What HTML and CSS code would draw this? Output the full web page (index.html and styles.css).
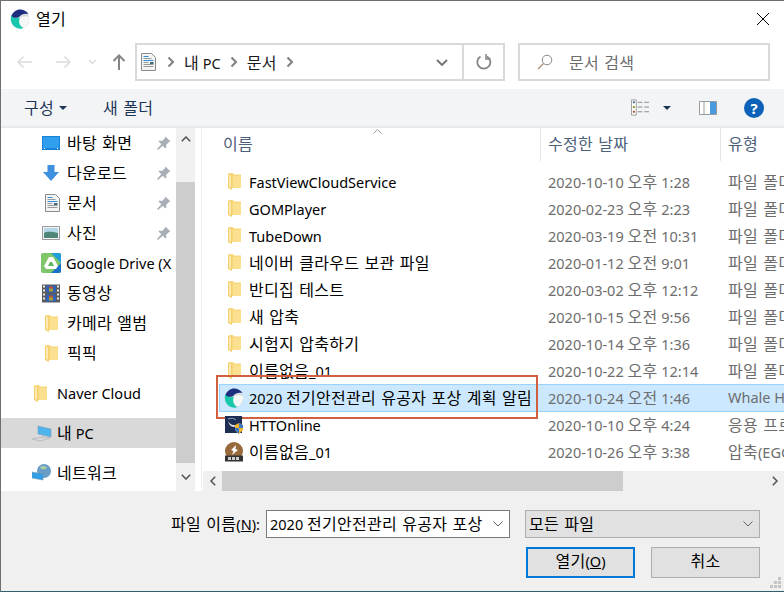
FILE: index.html
```html
<!DOCTYPE html>
<html lang="ko">
    <head>
        <meta charset="UTF-8">
        <title>열기</title>
        <link rel="stylesheet" href="styles.css">
    </head>
    <body>
        <svg class="defs" width="0" height="0">
            <symbol id="whale" viewBox="0 0 20 20">
                <circle cx="10" cy="10" r="9.500" fill="#d5dcde"/>
                <path d="M9 9c4-2 7-2 10-1 .5 4-1 8-5 10.500-3-.5-6-5-5-9.500z" fill="#f6f8f8"/>
                <path d="M1.500 6C0 10 1 15 5 18c3 2 6 2 8.500 1C9.500 17 8 13 10 8.500 7 10 4 9 1.500 6z" fill="#17c8ad"/>
                <path d="M1.500 7C3 3 6.500.5 10 .5c3.500 0 6.500 1.500 8.500 4.500-3.500-1-7.500 0-9.500 3-2.500 1.500-5.500 1-7.500-1z" fill="#1c2f7e"/>
            </symbol>
            <symbol id="folder" viewBox="0 0 13 17">
                <path d="M1 0h4l1 1.500h7v13.500H3z" fill="#f8d77c"/>
                <path d="M5 3h8v12H5z" fill="#fbe08f"/>
                <path d="M0 .5l4 1.500v15L0 15z" fill="#f5cf6c"/>
                <path d="M1 1.500l2 .8v12.500l-2-.8z" fill="#fdeab0"/>
            </symbol>
            <symbol id="doc" viewBox="0 0 15 18">
                <path d="M.5.500h10l4 4v13H.5z" fill="#f4f4f4" stroke="#8a8a8a"/>
                <path d="M2.500 3h5v1h-5zM2.500 7h10v1h-10z" fill="#2f8fdc"/>
                <path d="M2.500 5h8v1h-8zM2.500 9h5v1h-5zM2.500 11h10v1h-10zM2.500 13h10v1h-10z" fill="#9a9a9a"/>
                <path d="M9 9h3.500v2H9z" fill="#3d6b78"/>
            </symbol>
            <symbol id="pin" viewBox="0 0 14 14">
                <path d="M8.500.5l5 5-1.500.5-3 3 .5 2.500-1 1-2.800-2.800L1 14 0 13l4.300-4.700L1.500 5.500l1-1L5 5l3-3z" fill="#a9afb6"/>
            </symbol>
            <symbol id="chev" viewBox="0 0 8 12">
                <path d="M1.500 1.500L6 6l-4.500 4.500" fill="none" stroke="#808080" stroke-width="2"/>
            </symbol>
        </svg>

        <div class="dialog">
            <div class="titlebar">
                <svg class="whale-title"><use href="#whale"/></svg>
                <span class="title ko">열기</span>
                <svg class="close" viewBox="0 0 12 12"><path d="M0 0l12 12M12 0L0 12" stroke="#000" stroke-width="1" fill="none"/></svg>
            </div>

            <div class="navbar">
                <div class="navbtns">
                    <svg class="nav-arrow" viewBox="0 0 15 12"><path d="M15 6H1M6.500.5L1 6l5.500 5.500" fill="none" stroke="#dcdcdc" stroke-width="1.500"/></svg>
                    <svg class="nav-arrow forward" viewBox="0 0 15 12"><path d="M0 6h14M8.500.5L14 6l-5.500 5.500" fill="none" stroke="#dcdcdc" stroke-width="1.500"/></svg>
                    <svg class="nav-down" viewBox="0 0 9 6"><path d="M1 1l3.500 3.500L8 1" fill="none" stroke="#dcdcdc" stroke-width="1.500"/></svg>
                    <svg class="nav-up" viewBox="0 0 12 16"><path d="M6 16V1.500M.5 7L6 1.500 11.500 7" fill="none" stroke="#858585" stroke-width="2"/></svg>
                </div>
                <div class="address">
                    <svg class="addr-doc"><use href="#doc"/></svg>
                    <svg class="crumb-chev first"><use href="#chev"/></svg>
                    <span class="crumb"><span class="ko">내</span> PC</span>
                    <svg class="crumb-chev"><use href="#chev"/></svg>
                    <span class="crumb ko">문서</span>
                    <svg class="crumb-chev"><use href="#chev"/></svg>
                    <svg class="addr-down" viewBox="0 0 12 7"><path d="M1 1l5 5 5-5" fill="none" stroke="#707070" stroke-width="1.800"/></svg>
                    <div class="refresh">
                        <svg viewBox="0 0 16 16" width="16" height="16"><path d="M11 2.500A6.500 6.500 0 1 1 4.500 2.600" fill="none" stroke="#858585" stroke-width="1.800"/><path d="M10 0v5h4.500" fill="none" stroke="#858585" stroke-width="1.500"/></svg>
                    </div>
                </div>
                <div class="search">
                    <svg class="search-ico" viewBox="0 0 16 16"><circle cx="10" cy="6" r="4.800" fill="none" stroke="#8a8a8a" stroke-width="1"/><path d="M6.500 9.500L1 15" stroke="#b08a70" stroke-width="1.200"/></svg>
                    <span class="ko">문서 검색</span>
                </div>
            </div>

            <div class="commandbar">
                <span class="cmd ko">구성</span>
                <span class="caret"></span>
                <span class="cmd newfolder ko">새 폴더</span>
                <svg class="view-ico" viewBox="0 0 19 17">
                    <path d="M.5.500h5v16h-5z" fill="#fff" stroke="#9a9a9a"/>
                    <path d="M2 2h2v2H2z" fill="#3a5f96"/><path d="M2 7h2v2H2z" fill="#8f8f2e"/><path d="M2 12h2v2H2z" fill="#b0452e"/>
                    <path d="M7 3h5M14 3h5M7 8h5M14 8h5M7 13h5M14 13h5" stroke="#8a8a8a"/>
                </svg>
                <span class="caret view-caret"></span>
                <svg class="pane-ico" viewBox="0 0 18 14">
                    <path d="M.5.500h17v13H.5z" fill="#fff" stroke="#9a9a9a"/>
                    <path d="M11 1h6v12h-6z" fill="#4a9ae0"/>
                    <path d="M5 1v12" stroke="#9a9a9a"/>
                </svg>
                <span class="help">?</span>
            </div>

            <div class="main">
                <div class="sidebar">
                    <div class="nav-item"><svg class="si" viewBox="0 0 18 14"><path d="M0 0h18v14H0z" fill="#1b80d8"/><path d="M1 1h16v11H1z" fill="#2f9fee"/><path d="M2 12.500h1M15 12.500h1" stroke="#fff"/></svg><span class="ko">바탕 화면</span><svg class="pin"><use href="#pin"/></svg></div>
                    <div class="nav-item"><svg class="si" viewBox="0 0 18 16"><path d="M5.500 0h7v7H17l-8 9-8-9h4.500z" fill="#3f8fe0"/></svg><span class="ko">다운로드</span><svg class="pin"><use href="#pin"/></svg></div>
                    <div class="nav-item"><svg class="si si-doc"><use href="#doc"/></svg><span class="ko">문서</span><svg class="pin"><use href="#pin"/></svg></div>
                    <div class="nav-item"><svg class="si" viewBox="0 0 18 14"><path d="M.5.500h17v13H.5z" fill="#f4f4f4" stroke="#9a9a9a"/><path d="M2 2h14v5H2z" fill="#b4d6e8"/><path d="M2 7c4-2 8-1 14 0v5H2z" fill="#4f8678"/></svg><span class="ko">사진</span><svg class="pin"><use href="#pin"/></svg></div>
                    <div class="nav-item"><svg class="si si-square" viewBox="0 0 20 20"><rect width="20" height="20" rx="2" fill="#7fc66a"/><path d="M10 0h8a2 2 0 0 1 2 2v8z" fill="#1e9fdc"/><path d="M20 10v8a2 2 0 0 1-2 2H10z" fill="#1a72c8"/><path d="M8 4h4l5 9-2 3H5l-2-3z" fill="#fff"/><path d="M9 9h2l2 4H7z" fill="#5bb55f"/></svg><span>Google Drive (X</span></div>
                    <div class="nav-item"><svg class="si si-film" viewBox="0 0 18 18"><path d="M0 0h18v18H0z" fill="#5b5b5b"/><path d="M1 1h2v2H1zM1 5h2v2H1zM1 9h2v2H1zM1 13h2v2H1zM15 1h2v2h-2zM15 5h2v2h-2zM15 9h2v2h-2zM15 13h2v2h-2z" fill="#e8e8e8"/><path d="M4 1h10v7H4z" fill="#2f62b8"/><path d="M4 10h10v7H4z" fill="#2f62b8"/><path d="M7 2h4v2H7zM7 11h4v2H7z" fill="#c8502a"/><path d="M7 4h4v3H7zM7 13h4v3H7z" fill="#a8a02a"/></svg><span class="ko">동영상</span></div>
                    <div class="nav-item"><svg class="si si-folder"><use href="#folder"/></svg><span class="ko">카메라 앨범</span></div>
                    <div class="nav-item"><svg class="si si-folder"><use href="#folder"/></svg><span class="ko">픽픽</span></div>
                    <div class="nav-item root group"><svg class="si si-folder"><use href="#folder"/></svg><span>Naver Cloud</span></div>
                    <div class="nav-item root group selected"><svg class="si" viewBox="0 0 20 16"><path d="M6 1l13 3v8L6 9z" fill="#4fb4ee" stroke="#7f9fb8" stroke-width=".6"/><path d="M12 11l-1 2M0 14l11-2 7 1-10 3z" fill="none" stroke="#b9bdc2"/></svg><span><span class="ko">내</span> PC</span></div>
                    <div class="nav-item root group"><svg class="si" viewBox="0 0 20 18"><circle cx="12" cy="7" r="7" fill="#6a9cc8"/><path d="M8 3c3-2 6-1 7 1-2 2-6 2-7-1z" fill="#a8d0a0"/><path d="M0 8l11 2v6L0 14z" fill="#2f9fe8" stroke="#6f93b0" stroke-width=".6"/></svg><span class="ko">네트워크</span></div>
                </div>

                <div class="vscroll">
                    <div class="sb-btn"><svg viewBox="0 0 10 6" width="10" height="6"><path d="M.8 5.200L5 1l4.200 4.200" fill="none" stroke="#505050" stroke-width="1.500"/></svg></div>
                    <div class="sb-thumb"></div>
                    <div class="sb-btn"><svg viewBox="0 0 10 6" width="10" height="6"><path d="M.8.800L5 5l4.200-4.200" fill="none" stroke="#505050" stroke-width="1.500"/></svg></div>
                </div>

                <div class="files">
                    <div class="header">
                        <svg class="sort" viewBox="0 0 9 5"><path d="M.5 4.500L4.500.5l4 4" fill="none" stroke="#9a9a9a"/></svg>
                        <div class="col-name ko">이름</div>
                        <div class="col-date ko">수정한 날짜</div>
                        <div class="col-type ko">유형</div>
                    </div>
                    <div class="rows">
                        <div class="row"><svg class="fi fi-folder"><use href="#folder"/></svg><span class="name">FastViewCloudService</span><span class="date">2020-10-10 <span class="ko">오후</span> 1:28</span><span class="type ko">파일 폴더</span></div>
                        <div class="row"><svg class="fi fi-folder"><use href="#folder"/></svg><span class="name">GOMPlayer</span><span class="date">2020-02-23 <span class="ko">오후</span> 2:23</span><span class="type ko">파일 폴더</span></div>
                        <div class="row"><svg class="fi fi-folder"><use href="#folder"/></svg><span class="name">TubeDown</span><span class="date">2020-03-19 <span class="ko">오전</span> 10:31</span><span class="type ko">파일 폴더</span></div>
                        <div class="row"><svg class="fi fi-folder"><use href="#folder"/></svg><span class="name ko">네이버 클라우드 보관 파일</span><span class="date">2020-01-12 <span class="ko">오전</span> 9:01</span><span class="type ko">파일 폴더</span></div>
                        <div class="row"><svg class="fi fi-folder"><use href="#folder"/></svg><span class="name ko">반디집 테스트</span><span class="date">2020-03-02 <span class="ko">오후</span> 12:12</span><span class="type ko">파일 폴더</span></div>
                        <div class="row"><svg class="fi fi-folder"><use href="#folder"/></svg><span class="name ko">새 압축</span><span class="date">2020-10-15 <span class="ko">오전</span> 9:56</span><span class="type ko">파일 폴더</span></div>
                        <div class="row"><svg class="fi fi-folder"><use href="#folder"/></svg><span class="name ko">시험지 압축하기</span><span class="date">2020-10-14 <span class="ko">오후</span> 1:36</span><span class="type ko">파일 폴더</span></div>
                        <div class="row"><svg class="fi fi-folder"><use href="#folder"/></svg><span class="name mixed"><span class="ko">이름없음</span>_01</span><span class="date">2020-10-22 <span class="ko">오후</span> 12:14</span><span class="type ko">파일 폴더</span></div>
                        <div class="row selected"><svg class="fi"><use href="#whale"/></svg><span class="name mixed">2020 <span class="ko">전기안전관리 유공자 포상 계획 알림</span></span><span class="date">2020-10-24 <span class="ko">오전</span> 1:46</span><span class="type">Whale HTML</span><div class="callout"></div></div>
                        <div class="row"><svg class="fi" viewBox="0 0 20 20"><path d="M1 1h17v17H1z" fill="#1e2f55"/><path d="M4 6c2 4 6 5 9 4-2 3-7 3-9-4z" fill="#e6e6e6"/><path d="M4 4c3-1 6-1 8 1" fill="none" stroke="#8fa8c8"/><path d="M11 10l4-2 4 2v5l-4 4-4-4z" fill="#f0b429"/><path d="M15 8l4 2v3h-4zM11 13h4v6l-4-4z" fill="#3d78c8"/></svg><span class="name">HTTOnline</span><span class="date">2020-10-10 <span class="ko">오후</span> 4:24</span><span class="type ko">응용 프로그램</span></div>
                        <div class="row"><svg class="fi" viewBox="0 0 20 20"><circle cx="10" cy="9" r="9" fill="#96683a"/><path d="M12 3L7 8l2.500 1L8 13l6-5-2.500-1z" fill="#fff"/><path d="M1 13.500h18v6H1z" fill="#333"/><path d="M4 15h3v3H4zM8 15h3v3H8zM12 15h3v3h-3z" fill="#ccc"/></svg><span class="name mixed"><span class="ko">이름없음</span>_01</span><span class="date">2020-10-26 <span class="ko">오후</span> 3:38</span><span class="type mixed"><span class="ko">압축</span>(EGG)</span></div>
                    </div>
                    <div class="hscroll">
                        <div class="hs-btn"><svg viewBox="0 0 6 10" width="6" height="10"><path d="M5.200.8L1 5l4.200 4.200" fill="none" stroke="#505050" stroke-width="1.500"/></svg></div>
                        <div class="hs-thumb"></div>
                        <div class="hs-track"></div>
                        <div class="hs-btn"><svg viewBox="0 0 6 10" width="6" height="10"><path d="M.8.800L5 5 .8 9.200" fill="none" stroke="#505050" stroke-width="1.500"/></svg></div>
                    </div>
                </div>
            </div>

            <div class="footer">
                <div class="name-line">
                    <label class="fname-label"><span class="ko">파일 이름</span>(<u>N</u>):</label>
                    <div class="fname-input">
                        <span>2020 <span class="ko">전기안전관리 유공자 포상</span></span>
                        <svg class="combo-chev" viewBox="0 0 10 6"><path d="M.5.500L5 5 9.500.5" fill="none" stroke="#606060"/></svg>
                    </div>
                    <div class="ftype">
                        <span class="ko">모든 파일</span>
                        <svg class="combo-chev" viewBox="0 0 10 6"><path d="M.5.500L5 5 9.500.5" fill="none" stroke="#606060"/></svg>
                    </div>
                </div>
                <div class="button-line">
                    <div class="btn default"><span class="ko">열기</span>(<u>O</u>)</div>
                    <div class="btn ko">취소</div>
                </div>
                <svg class="grip" viewBox="0 0 12 12"><path d="M8 0h3v3H8zM4 4h3v3H4zM8 4h3v3H8zM0 8h3v3H0zM4 8h3v3H4zM8 8h3v3H8z" fill="#c4c4c4"/></svg>
            </div>
        </div>
    </body>
</html>
```

FILE: styles.css
```css
html, body {
    margin: 0;
    padding: 0;
    background: #ffffff;
}

body {
    font-family: "Noto Sans", "Noto Sans CJK KR", sans-serif;
    font-size: 14.5px;
    color: #000000;
}

/* hangul runs a bit bigger than latin, like the system font */
.ko {
    font-size: 16px;
    letter-spacing: .28px;
    word-spacing: .8px;
}

/* the CJK font sits low in its line box, pull those runs up */
.row > .ko, .nav-item > .ko, .cmd, .title,
.mixed, .date, .selected > span, .name-line span, .fname-label {
    margin-top: -2px;
}

.defs {
    position: absolute;
}

svg {
    display: block;
    flex: none;
}

.dialog {
    width: 784px;
    height: 592px;
    box-sizing: border-box;
    border-top: 1px solid #6f6f6f;
    border-left: 1px solid #6f6f6f;
    border-bottom: 1px solid #2f5f6a;
    display: flex;
    flex-direction: column;
    overflow: hidden;
    background: #ffffff;
}

/* title */
.titlebar {
    height: 42px;
    flex: none;
    display: flex;
    align-items: center;
    padding: 0 15px 6px 9px;
    box-sizing: border-box;
}

.whale-title {
    width: 20px;
    height: 20px;
}

.title {
    margin-left: 6px;
    flex: 1;
}

.close {
    width: 12px;
    height: 12px;
}

/* address row */
.navbar {
    height: 46px;
    flex: none;
    display: flex;
    align-items: flex-start;
    box-sizing: border-box;
}

.navbtns {
    width: 134px;
    height: 38px;
    display: flex;
    align-items: center;
    padding-left: 16px;
    box-sizing: border-box;
}

.nav-arrow {
    width: 15px;
    height: 12px;
}

.nav-arrow.forward {
    margin-left: 24px;
}

.nav-down {
    width: 9px;
    height: 6px;
    margin-left: 17px;
}

.nav-up {
    width: 12px;
    height: 16px;
    margin-left: 16px;
}

.address {
    width: 370px;
    height: 38px;
    box-sizing: border-box;
    border: 2px solid #d9d9d9;
    display: flex;
    align-items: center;
    padding-left: 4px;
}

.addr-doc {
    width: 15px;
    height: 18px;
}

.crumb-chev {
    width: 8px;
    height: 12px;
    margin: 0 9px 0 9px;
}

.crumb-chev.first {
    margin-left: 11px;
}

.crumb {
    color: #1a1a1a;
}

.addr-down {
    width: 12px;
    height: 7px;
    margin-left: auto;
    margin-right: 14px;
}

.refresh {
    width: 41px;
    height: 34px;
    border-left: 2px solid #d9d9d9;
    display: flex;
    align-items: center;
    justify-content: center;
    box-sizing: border-box;
}

.search {
    width: 252px;
    height: 38px;
    margin-left: 13px;
    box-sizing: border-box;
    border: 2px solid #d9d9d9;
    display: flex;
    align-items: center;
    padding-left: 17px;
    color: #6d6d6d;
}

.search-ico {
    width: 16px;
    height: 16px;
    margin-right: 16px;
}

/* command bar */
.commandbar {
    height: 37px;
    flex: none;
    background: #f3f4f6;
    border-bottom: 2px solid #e8e9eb;
    display: flex;
    align-items: center;
    padding-left: 23px;
}

.cmd {
    color: #1c3557;
}

.caret {
    width: 0;
    height: 0;
    border-left: 4px solid transparent;
    border-right: 4px solid transparent;
    border-top: 4px solid #1c3557;
    margin-left: 5px;
}

.newfolder {
    margin-left: 36px;
}

.view-ico {
    width: 18px;
    height: 17px;
    margin-left: auto;
}

.view-caret {
    margin-left: 14px;
}

.pane-ico {
    width: 18px;
    height: 14px;
    margin-left: 28px;
}

.help {
    width: 20px;
    height: 20px;
    border-radius: 50%;
    background: #0b62b8;
    color: #ffffff;
    font-weight: bold;
    font-size: 15px;
    line-height: 20px;
    text-align: center;
    margin-left: 27px;
    margin-right: 20px;
}

/* main area */
.main {
    flex: 1;
    display: flex;
    min-height: 0;
}

.sidebar {
    width: 175px;
    flex: none;
    overflow: hidden;
}

.nav-item {
    height: 30px;
    display: flex;
    align-items: center;
    padding-left: 41px;
    white-space: nowrap;
}

.nav-item .si {
    width: 18px;
    height: 16px;
    margin-right: 7px;
}

.nav-item .si-doc {
    width: 15px;
    height: 18px;
    margin-left: 3px;
    margin-right: 7px;
}

.nav-item .si-square {
    width: 20px;
    height: 20px;
    margin-left: -1px;
    margin-right: 5px;
}

.nav-item .si-film {
    width: 18px;
    height: 19px;
}

.nav-item .si-folder {
    width: 13px;
    height: 17px;
    margin-left: 3px;
    margin-right: 9px;
}

.nav-item.root {
    padding-left: 31px;
}

.nav-item.root .si {
    width: 20px;
    height: 18px;
    margin-right: 5px;
}

.nav-item.root .si-folder {
    width: 13px;
    height: 17px;
    margin-left: 2px;
    margin-right: 10px;
}

.group {
    margin-top: 10px;
}

.nav-item.selected {
    background: #d9d9d9;
}

.pin {
    width: 14px;
    height: 14px;
    margin-left: auto;
    margin-right: 5px;
}

.vscroll {
    width: 19px;
    flex: none;
    background: #f0f0f0;
    display: flex;
    flex-direction: column;
}

.sb-btn {
    height: 28px;
    flex: none;
    display: flex;
    align-items: center;
    justify-content: center;
}

.sb-btn:first-child {
    height: 54px;
    align-items: flex-start;
    padding-top: 8px;
    box-sizing: border-box;
}

.sb-thumb {
    flex: 1;
    background: #cdcdcd;
}

.files {
    flex: 1;
    min-width: 0;
    margin-left: 6px;
    border-left: 1px solid #f0f0f0;
    display: flex;
    flex-direction: column;
    position: relative;
}

.header {
    height: 40px;
    flex: none;
    display: flex;
    color: #4c607a;
    position: relative;
}

.sort {
    position: absolute;
    left: 171px;
    top: 1px;
    width: 9px;
    height: 5px;
}

.col-name {
    width: 339px;
    padding-left: 21px;
    box-sizing: border-box;
    border-right: 1px solid #e5e5e5;
    height: 33px;
    line-height: 33px;
}

.col-date {
    width: 180px;
    padding-left: 7px;
    box-sizing: border-box;
    border-right: 1px solid #e5e5e5;
    height: 33px;
    line-height: 33px;
}

.col-type {
    padding-left: 7px;
    height: 33px;
    line-height: 33px;
    white-space: nowrap;
}

.rows {
    flex: 1;
    min-height: 0;
}

.row {
    height: 27px;
    display: flex;
    align-items: center;
    white-space: nowrap;
    box-sizing: border-box;
    margin-left: 17px;
    position: relative;
}

.fi {
    width: 20px;
    height: 20px;
    margin-left: 5px;
}

.fi-folder {
    width: 13px;
    height: 17px;
    margin-left: 9px;
    margin-right: 3px;
}

.name {
    width: 299px;
    margin-left: 5px;
    flex: none;
}

.date {
    width: 180px;
    flex: none;
    color: #6d6d6d;
}

.type {
    color: #6d6d6d;
}

.row.selected {
    background: #cce8ff;
    border-top: 1px solid #99d1ff;
    border-bottom: 1px solid #99d1ff;
    border-left: 1px solid #99d1ff;
    height: 28px;
    margin-bottom: -1px;
}

.row.selected .fi {
    margin-left: 4px;
}

/* the red box drawn on the screenshot */
.callout {
    position: absolute;
    left: -4px;
    top: -10px;
    width: 318px;
    height: 40px;
    border: 2px solid #d0603f;
}

.hscroll {
    height: 20px;
    flex: none;
    display: flex;
    background: #f0f0f0;
    margin-left: 1px;
}

.hs-btn {
    width: 19px;
    flex: none;
    display: flex;
    align-items: center;
    justify-content: center;
}

.hs-thumb {
    width: 401px;
    flex: none;
    background: #cdcdcd;
}

.hs-track {
    flex: 1;
}

/* bottom */
.footer {
    height: 100px;
    flex: none;
    background: #f0f0f0;
    position: relative;
    box-sizing: border-box;
    padding-top: 19px;
}

.name-line {
    display: flex;
    align-items: center;
    height: 28px;
}

.fname-label {
    width: 265px;
    padding-right: 6px;
    box-sizing: border-box;
    text-align: right;
}

.fname-input {
    width: 244px;
    height: 28px;
    box-sizing: border-box;
    background: #ffffff;
    border: 1px solid #7a7a7a;
    display: flex;
    align-items: center;
    padding-left: 3px;
}

.combo-chev {
    width: 10px;
    height: 6px;
    margin-left: auto;
    margin-right: 6px;
}

.ftype {
    width: 235px;
    height: 28px;
    margin-left: 15px;
    box-sizing: border-box;
    background: #e1e1e1;
    border: 1px solid #adadad;
    display: flex;
    align-items: center;
    padding-left: 3px;
}

.button-line {
    display: flex;
    margin-top: 9px;
    padding-left: 525px;
}

.btn {
    width: 109px;
    height: 31px;
    line-height: 27px;
    box-sizing: border-box;
    background: #e1e1e1;
    border: 1px solid #adadad;
    text-align: center;
    margin-left: 16px;
}

.btn.default {
    margin-left: 0;
    border: 2px solid #0078d7;
    line-height: 25px;
}

.grip {
    position: absolute;
    right: 2px;
    bottom: 2px;
    width: 12px;
    height: 12px;
}
```
